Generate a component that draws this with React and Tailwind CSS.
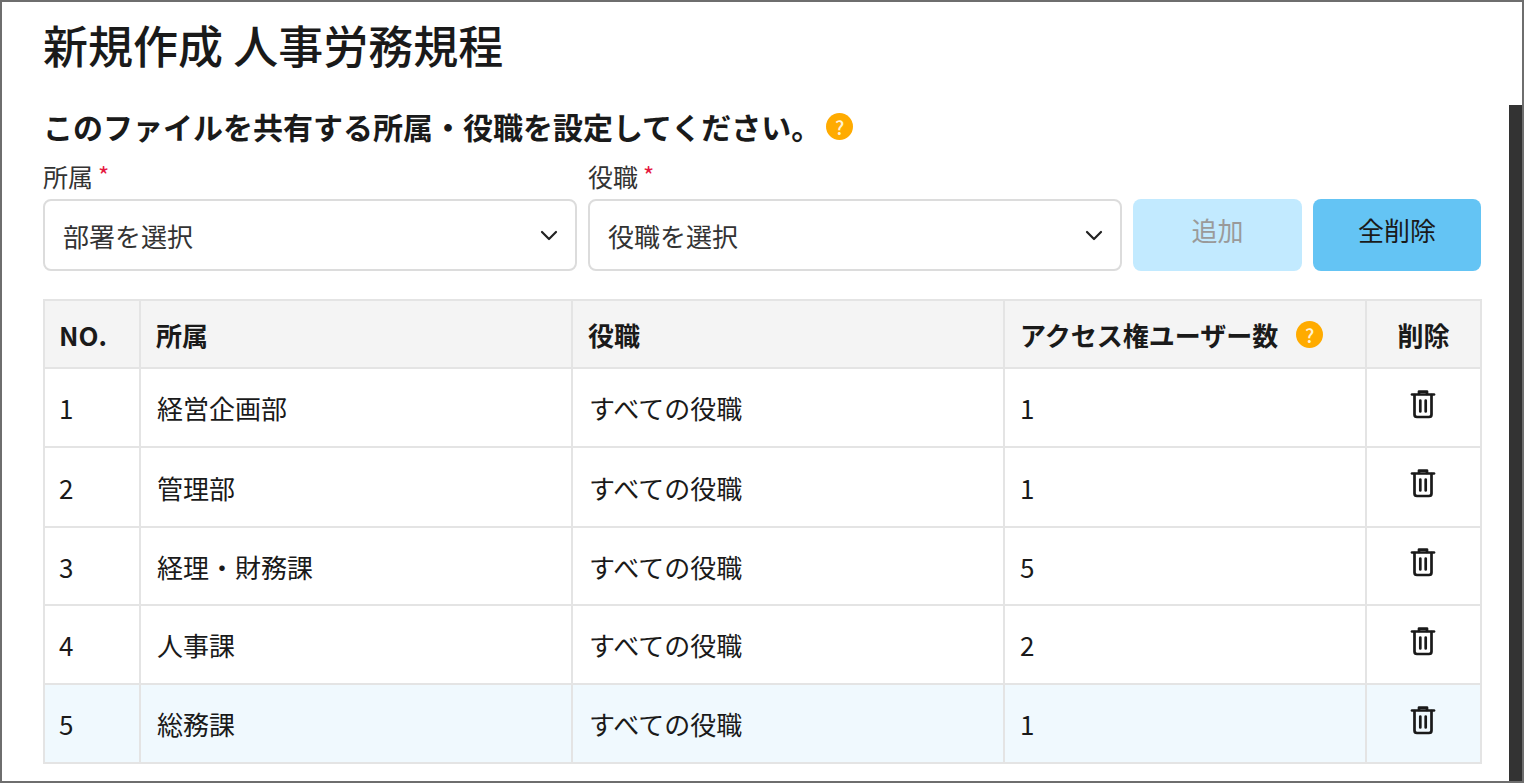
import React from 'react'

const rows = [
  { no: 1, dept: '経営企画部', count: 1, h: 'h-[79px]' },
  { no: 2, dept: '管理部', count: 1, h: 'h-[80px]' },
  { no: 3, dept: '経理・財務課', count: 5, h: 'h-[78px]' },
  { no: 4, dept: '人事課', count: 2, h: 'h-[79px]' },
  { no: 5, dept: '総務課', count: 1, h: 'h-[79px]', active: true },
]

function Help() {
  return (
    <span className="inline-flex h-[27px] w-[27px] shrink-0 items-center justify-center rounded-full bg-[#ffab00] text-[19px] font-medium leading-none text-[#fff3d6]">
      ?
    </span>
  )
}

function Chevron() {
  return (
    <svg width="18" height="11" viewBox="0 0 18 11" fill="none" stroke="#222" strokeWidth="2.2" strokeLinecap="round" strokeLinejoin="round">
      <path d="M2 2l7 7 7-7" />
    </svg>
  )
}

function Trash() {
  return (
    <svg width="26" height="30" viewBox="0 0 26 30" fill="none" stroke="#1a1a1a" strokeWidth="2.7" strokeLinecap="round" strokeLinejoin="round">
      <path d="M2 5.5h22" />
      <path d="M9 5V2.6h8V5" />
      <path d="M4.5 6v19.5a2.5 2.5 0 0 0 2.5 2.5h12a2.5 2.5 0 0 0 2.5-2.5V6" />
      <path d="M10.3 11.5v11M15.7 11.5v11" />
    </svg>
  )
}

function Field({ label, placeholder, width }) {
  return (
    <div className={`flex flex-col ${width}`}>
      <div className="flex h-[41px] items-start text-[25px] leading-[36px] text-[#333]">
        {label}
        <span className="ml-[5px] text-[24px] leading-[34px] text-[#e5173f]">*</span>
      </div>
      <div className="flex h-[72px] items-center justify-between rounded-lg border-2 border-[#dcdcdc] bg-white pl-[18px] pr-[17px] text-[26px] text-[#333]">
        <span>{placeholder}</span>
        <Chevron />
      </div>
    </div>
  )
}

export default function App() {
  return (
    <div className="flex h-[783px] w-[1524px] overflow-hidden border-2 border-[#6e6e6e] bg-white font-['Noto_Sans_CJK_JP','Noto_Sans',sans-serif] text-[#1a1a1a]">
      <main className="w-[1507px] shrink-0 pl-[41px] pr-[26px]">
        <h1 className="mt-[13px] h-[60px] text-[45px] font-medium leading-[60px]">新規作成 人事労務規程</h1>

        <div className="mt-[29px] flex h-[44px] items-center gap-[5px]">
          <h2 className="text-[30px] font-bold leading-[44px]">このファイルを共有する所属・役職を設定してください。</h2>
          <Help />
        </div>

        <div className="mt-[10px] flex items-end gap-[11px]">
          <Field label="所属" placeholder="部署を選択" width="w-[534px]" />
          <Field label="役職" placeholder="役職を選択" width="w-[534px]" />
          <button className="h-[72px] w-[169px] rounded-lg bg-[#c2eaff] pb-[12px] text-[26px] text-[#9a9a9a]">追加</button>
          <button className="h-[72px] w-[168px] rounded-lg bg-[#64c4f4] pb-[12px] text-[26px] text-[#1a1a1a]">全削除</button>
        </div>

        <table className="mt-[28px] w-[1437px] table-fixed border-collapse text-[26px]">
          <colgroup>
            <col className="w-[96px]" />
            <col className="w-[432px]" />
            <col className="w-[432px]" />
            <col className="w-[362px]" />
            <col className="w-[115px]" />
          </colgroup>
          <thead>
            <tr className="h-[68px] bg-[#f4f4f4] text-left">
              <th className="border-2 border-[#e4e4e4] pl-[14px] font-bold">NO.</th>
              <th className="border-2 border-[#e4e4e4] pl-[15px] font-bold">所属</th>
              <th className="border-2 border-[#e4e4e4] pl-[15px] font-bold">役職</th>
              <th className="border-2 border-[#e4e4e4] pl-[15px] font-bold">
                <span className="flex items-center gap-[18px]">
                  アクセス権ユーザー数
                  <Help />
                </span>
              </th>
              <th className="border-2 border-[#e4e4e4] text-center font-bold">削除</th>
            </tr>
          </thead>
          <tbody>
            {rows.map((r) => (
              <tr key={r.no} className={`${r.h} ${r.active ? 'bg-[#f0f9fe]' : 'bg-white'}`}>
                <td className="border-2 border-[#e4e4e4] pl-[14px]">{r.no}</td>
                <td className="border-2 border-[#e4e4e4] pl-[16px]">{r.dept}</td>
                <td className="border-2 border-[#e4e4e4] pl-[16px]">すべての役職</td>
                <td className="border-2 border-[#e4e4e4] pl-[15px]">{r.count}</td>
                <td className="border-2 border-[#e4e4e4] pb-[16px] pr-[2px] text-center">
                  <span className="inline-flex justify-center align-middle">
                    <Trash />
                  </span>
                </td>
              </tr>
            ))}
          </tbody>
        </table>
      </main>
      <div className="mt-[103px] h-full w-[13px] shrink-0 bg-[#333333]" />
    </div>
  )
}
